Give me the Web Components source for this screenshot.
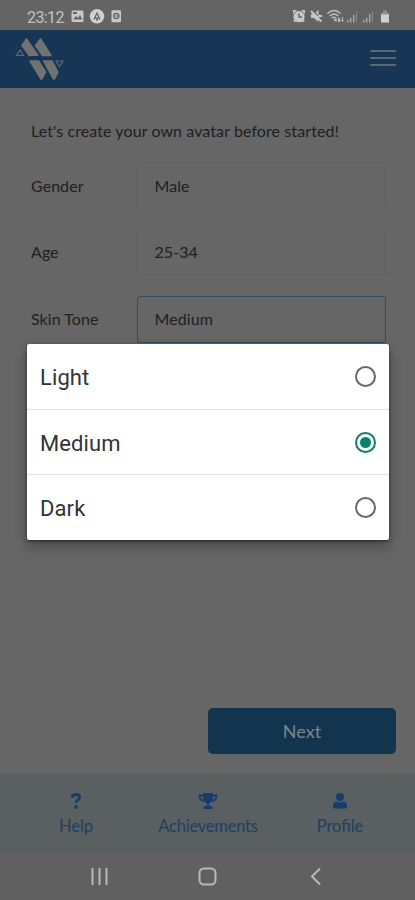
<!DOCTYPE html>
<html lang="en">
<head>
<meta charset="utf-8">
<title>Create avatar</title>
<style>
html,body{margin:0;padding:0}
body{width:415px;height:900px;overflow:hidden;background:#666;font-family:Lato,"Liberation Sans",sans-serif}
</style>
</head>
<body>
<avatar-screen></avatar-screen>
<script>
function define(name, html, setup) {
  customElements.define(name, class extends HTMLElement {
    constructor() {
      super();
      this.attachShadow({ mode: 'open' }).innerHTML = html;
    }
    connectedCallback() { if (setup) setup(this, this.shadowRoot); }
  });
}

define('status-bar', `
<style>
:host{display:flex;height:30px;background:#646464;align-items:flex-start;justify-content:space-between;box-sizing:border-box;padding:8px 24px 0 27px;font:16px/19px Roboto,sans-serif;color:#c2c2c2}
.l{display:flex;align-items:flex-start}
.t{width:44px;letter-spacing:-.6px;white-space:nowrap}
svg{display:block}
</style>
<div class="l"><span class="t">23:12</span>
<svg width="52" height="18" viewBox="71 8 52 18">
<rect x="71.500" y="10.500" width="12" height="11.500" rx="1.500" fill="#c8c8c8"/><path d="M73 19.500l3-3.500 2 2 2-3 2.500 4.500zM73 12h4v2h-4z" fill="#666"/>
<circle cx="97" cy="16.300" r="7.200" fill="#d0d0d0"/><path d="M94 19.500l3-6.500 3 6.500M95.500 17l1.500 3 1.500-3" fill="none" stroke="#666" stroke-width="1.300"/>
<rect x="111.500" y="10.300" width="9.500" height="12" rx="1" fill="#c8c8c8"/><circle cx="116.300" cy="16" r="2.600" fill="none" stroke="#666" stroke-width="1.400"/><path d="M114.500 16h3.500" stroke="#666"/>
</svg></div>
<svg width="98" height="18" viewBox="293 8 98 18">
<g fill="#c8c8c8"><circle cx="299" cy="16.700" r="5.600"/><path d="M293 10h4l-4 4zM305 10h-4l4 4zM294 19l-.5 3h2.500zM304 19l.5 3h-2.500z"/></g><path d="M299 13.500v3.500h3" fill="none" stroke="#666" stroke-width="1.500"/>
<path d="M311 14h3l4.500-4v12l-4.500-4h-3z" fill="#c4c4c4"/><path d="M312.500 10.500l9 9" stroke="#646464" stroke-width="1.200"/><path d="M311 11l10.500 10.500M318 16h4" stroke="#c8c8c8" stroke-width="1.800"/>
<g fill="none" stroke="#bdbdbd" stroke-width="1.500"><path d="M327.500 13.500q6.500-6 13 0M329.700 16q4.300-4 8.600 0M332 18.300q2-2 4 0"/></g><path d="M333.500 19.500l3-1 .5 3h-2zM338 22v-5l3 3h-1v2zM342 17v3h-1l1.500 2 1.500-2h-1v-3z" fill="#bbb"/>
<g fill="#a6a6a6"><path d="M347 20h1.500v2.500H347zM350 18h1.500v4.500H350zM353 15h1.500v7.500H353z"/><path d="M356 11.500h1v11h-1z" opacity=".6"/><path d="M363 20h1.500v2.500H363zM366 18h1.500v4.500H366zM369 14h1.500v8.500H369z"/><path d="M372 11.500h1v11h-1z" opacity=".6"/></g>
<path d="M383 10.500h4V13h2v9.500h-8V13h2z" fill="#909090"/><path d="M381 14.500h8v8h-8z" fill="#cfcfcf"/>
</svg>`);

define('brand-header', `
<style>
:host{display:flex;height:58px;background:#173655;align-items:flex-start;justify-content:space-between;box-sizing:border-box;padding:7px 19px 0 15px}
.menu{display:flex;flex-direction:column;gap:4.500px;width:26px;padding-top:12.500px}
i{height:2.600px;background:#5c6770;border-radius:1px}
</style>
<svg width="50" height="46" viewBox="15 37 50 46">
<g fill="#727272" stroke="#727272" stroke-width="1.500" stroke-linejoin="round"><path d="M26.500 38.900L37.800 55.300H29L22 45.500zM40.500 38.900L51 55.500H42.500L35.500 45.500z"/><path d="M30 61H38.500L45.500 72L42 79H41zM43.500 61H52L58 72L54.500 79H53.500z"/></g>
<path d="M20 50l3.500 5.500H16.500zM56 61h7l-3.500 5.500z" fill="none" stroke="#5c6a74" stroke-width="1.200"/>
</svg>
<div class="menu"><i></i><i></i><i></i></div>`);

define('form-row', `
<style>
:host{display:flex;height:46px;align-items:center;font-size:16px;color:#202020}
label{width:106px;padding-bottom:2px;letter-spacing:.05px}
.box{box-sizing:border-box;width:249px;height:47px;border:1px solid #606162;border-radius:3px;display:flex;align-items:center;padding:0 0 2px 16.500px;letter-spacing:.08px}
:host([focused]) .box{border:1.500px solid #354c5e}
</style><label></label><div class="box"><slot></slot></div>`,
(el, root) => { root.querySelector('label').textContent = el.getAttribute('label'); });

define('primary-button', `
<style>
:host{display:flex;box-sizing:border-box;width:188px;height:46px;border-radius:5px;background:#12344f;color:#7b858c;align-items:center;justify-content:center;font-size:18px;letter-spacing:.1px}
</style><slot></slot>`);

define('tab-item', `
<style>
:host{display:flex;flex-direction:column;align-items:center;color:#1f3f60;font-size:16.500px;line-height:20px;width:132px}
:host([long]){letter-spacing:-.2px}
::slotted(svg){display:block;height:18px;margin-bottom:6px}
</style><slot name="icon"></slot><slot></slot>`);

define('tab-bar', `
<style>
:host{display:flex;box-sizing:border-box;height:77px;background:#5a5f62;padding:18px 9px 0 10px;justify-content:space-between}
</style><slot></slot>`);

define('system-nav', `
<style>:host{display:block;height:49px;background:#606060}svg{display:block}</style>
<svg width="415" height="49" viewBox="0 851 415 49" fill="none" stroke="#b8b8b8" stroke-width="2">
<path d="M92.500 868v17M99.500 868v17M106.500 868v17"/><rect x="199.500" y="868.500" width="16" height="16" rx="4.500"/><path d="M320 868.500l-8 8 8 8"/></svg>`);

define('radio-option', `
<style>
:host{display:flex;flex:1;align-items:center;justify-content:space-between;padding:3px 13px 0 13px;font:22px/26px Roboto,sans-serif;letter-spacing:.1px;color:#333;border-top:1px solid #e2e2e2}
:host(:first-child){border-top:0}
i{box-sizing:border-box;width:21px;height:21px;border:2px solid #686868;border-radius:50%;display:grid;place-items:center;margin-top:-3px}
:host([checked]) i{border-color:#0b806d}
:host([checked]) i::after{content:"";width:11px;height:11px;border-radius:50%;background:#0b806d}
</style><slot></slot><i></i>`);

define('choice-dialog', `
<style>
:host{display:flex;flex-direction:column;position:absolute;left:27px;top:344px;width:362px;height:196px;background:#fff;border-radius:2px;box-shadow:0 6px 14px rgba(0,0,0,.3),0 1px 3px rgba(0,0,0,.5)}
</style><slot></slot>`);

define('avatar-screen', `
<style>
:host{display:flex;flex-direction:column;position:relative;width:415px;height:900px;background:#666}
main{flex:1;display:flex;flex-direction:column;box-sizing:border-box;padding:32px 19px 20px 31px}
p{margin:0 0 22px;font-size:16px;line-height:21px;letter-spacing:.09px;color:#202020;white-space:nowrap}
.rows{display:flex;flex-direction:column;gap:20.500px}
primary-button{margin-top:auto;align-self:flex-end}
</style>
<status-bar></status-bar>
<brand-header></brand-header>
<main><p>Let's create your own avatar before started!</p>
<div class="rows"><form-row label="Gender">Male</form-row><form-row label="Age">25-34</form-row><form-row label="Skin Tone" focused>Medium</form-row></div>
<primary-button>Next</primary-button></main>
<tab-bar>
<tab-item><svg slot="icon" width="14" height="18" viewBox="0 0 14 18"><path d="M3 5.800Q3.600 2.500 7 2.500q3.600 0 3.600 2.700c0 2.800-3.600 2.500-3.600 5.800" fill="none" stroke="#173e6b" stroke-width="2.900"/><circle cx="7" cy="15" r="1.900" fill="#173e6b"/></svg>Help</tab-item>
<tab-item long><svg slot="icon" width="20" height="18" viewBox="0 0 20 18"><path d="M5 1h10v5q0 4-4 5.300V14h2q1.500 0 1.500 2v1h-9v-1q0-2 1.500-2h2v-2.700Q5 10 5 6z" fill="#173e6b"/><path d="M5 3.500H1.500Q1.500 8 6 9M15 3.500h3.500Q18.500 8 14 9" fill="none" stroke="#173e6b" stroke-width="1.800"/></svg>Achievements</tab-item>
<tab-item><svg slot="icon" width="16" height="18" viewBox="0 0 16 18"><circle cx="8" cy="5" r="4" fill="#173e6b"/><path d="M4.500 9.500q3.500 2 7 0 3.500.5 3.500 4V15q0 1.500-1.500 1.500h-11Q1 16.500 1 15v-1.500q0-3.500 3.500-4z" fill="#173e6b"/></svg>Profile</tab-item>
</tab-bar>
<system-nav></system-nav>
<choice-dialog><radio-option>Light</radio-option><radio-option checked>Medium</radio-option><radio-option>Dark</radio-option></choice-dialog>`);
</script>
</body>
</html>
